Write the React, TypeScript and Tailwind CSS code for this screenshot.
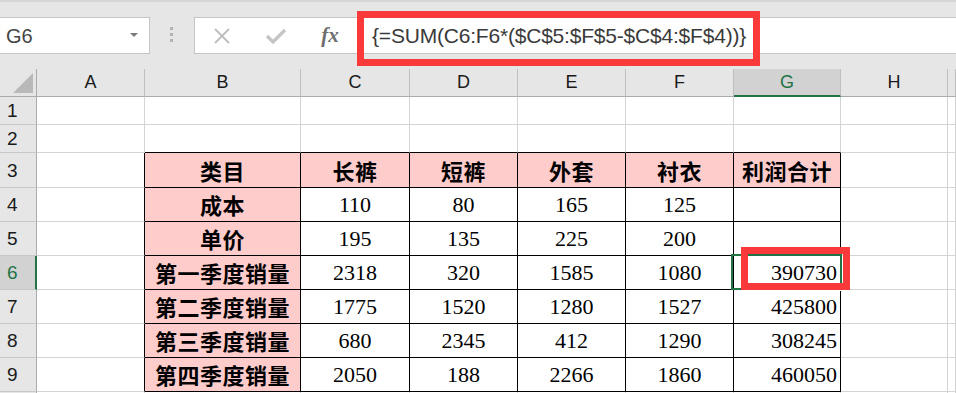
import React from 'react';

const COLS = ['', 'A', 'B', 'C', 'D', 'E', 'F', 'G', 'H', ''];
const ROWS = [1, 2, 3, 4, 5, 6, 7, 8, 9, 10];

const TABLE: Record<number, string[]> = {
  3: ['类目', '长裤', '短裤', '外套', '衬衣', '利润合计'],
  4: ['成本', '110', '80', '165', '125', ''],
  5: ['单价', '195', '135', '225', '200', ''],
  6: ['第一季度销量', '2318', '320', '1585', '1080', '390730'],
  7: ['第二季度销量', '1775', '1520', '1280', '1527', '425800'],
  8: ['第三季度销量', '680', '2345', '412', '1290', '308245'],
  9: ['第四季度销量', '2050', '188', '2266', '1860', '460050'],
};

const inTable = (r: number, c: number) => r >= 3 && r <= 9 && c >= 2 && c <= 7;

const ColHeader: React.FC<{ c: number }> = ({ c }) => {
  if (c === 0) {
    return (
      <div className="relative bg-[#e6e6e6] border-r border-b border-r-[#ababab] border-b-[#ababab]">
        <svg className="absolute left-0 top-0" width="36" height="27" viewBox="0 0 36 27">
          <polygon points="33,4 33,24 13,24" fill="#b9b9b9" />
        </svg>
      </div>
    );
  }
  const selected = COLS[c] === 'G';
  return (
    <div
      className={
        selected
          ? 'flex items-center justify-center bg-[#d2d2d2] border-r border-r-[#c0c0c0] border-b-2 border-b-[#217346] text-[#217346] text-[18px]'
          : 'flex items-center justify-center bg-[#e6e6e6] border-r border-r-[#c0c0c0] border-b border-b-[#ababab] text-[#1a1a1a] text-[18px]'
      }
    >
      {COLS[c]}
    </div>
  );
};

const RowHeader: React.FC<{ r: number }> = ({ r }) => {
  const selected = r === 6;
  return (
    <div
      className={
        selected
          ? 'flex items-center pl-[7px] pt-[2px] bg-[#d2d2d2] border-r-2 border-r-[#217346] border-b border-b-[#c8c8c8] text-[#217346] text-[19px]'
          : 'flex items-center pl-[7px] pt-[2px] bg-[#e6e6e6] border-r border-r-[#ababab] border-b border-b-[#c8c8c8] text-[#1a1a1a] text-[19px]'
      }
    >
      {r < 10 ? r : ''}
    </div>
  );
};

const Cell: React.FC<{ r: number; c: number }> = ({ r, c }) => {
  const rightBlack = r >= 3 && r <= 9 && c >= 1 && c <= 7;
  const bottomBlack = r >= 2 && r <= 9 && c >= 2 && c <= 7;
  const pink = inTable(r, c) && (r === 3 || c === 2);
  const text = inTable(r, c) ? TABLE[r][c - 2] : '';
  const numeric = inTable(r, c) && !pink;

  let cls = 'flex items-center border-r border-b overflow-hidden whitespace-nowrap ';
  cls += rightBlack ? 'border-r-black ' : 'border-r-[#d4d4d4] ';
  cls += bottomBlack ? 'border-b-black ' : 'border-b-[#d4d4d4] ';
  cls += pink ? 'bg-[#ffcccc] ' : 'bg-white ';
  if (pink) {
    cls += "justify-center font-bold text-[22px] tracking-[0.5px] font-['Noto_Sans_CJK_SC',sans-serif] text-black";
  } else if (numeric) {
    cls += c === 7 ? 'justify-end pr-[3px] ' : 'justify-center ';
    cls += "text-[22px] font-['Liberation_Serif',serif] text-black";
  }
  return <div className={cls}>{text}</div>;
};

export default function App() {
  return (
    <div className="relative w-[956px] h-[393px] overflow-hidden bg-white font-['Liberation_Sans',Arial,sans-serif]">
      {/* toolbar */}
      <div className="relative h-[69px] bg-[#e6e6e6] border-t-2 border-t-[#d6d6d6] pt-[15px] flex items-start">
        <div className="-ml-px w-[151px] h-[37px] bg-white border border-[#c6c6c6] flex items-center justify-between pl-[6px] pr-[11px]">
          <span className="text-[20px] text-[#444]">G6</span>
          <svg width="8" height="5" viewBox="0 0 8 5">
            <polygon points="0,0 8,0 4,4" fill="#7a7a7a" />
          </svg>
        </div>
        <div className="ml-[20px] mt-[10px] flex flex-col gap-[3px]">
          <div className="w-[3px] h-[3px] bg-[#b3b3b3]" />
          <div className="w-[3px] h-[3px] bg-[#b3b3b3]" />
          <div className="w-[3px] h-[3px] bg-[#b3b3b3]" />
        </div>
        <div className="ml-[21px] flex-1 h-[37px] bg-white border border-r-0 border-[#c6c6c6] flex items-center">
          <div className="w-[54px] flex justify-center">
            <svg width="18" height="16" viewBox="0 0 18 16">
              <path d="M2 1 L16 15 M16 1 L2 15" stroke="#bdbdbd" strokeWidth="1.8" fill="none" />
            </svg>
          </div>
          <div className="w-[54px] flex justify-center">
            <svg width="22" height="16" viewBox="0 0 22 16">
              <path d="M2 8 L8 14 L20 2" stroke="#c4c4c4" strokeWidth="3.2" fill="none" />
            </svg>
          </div>
          <div className="w-[54px] flex justify-center">
            <span className="font-['Liberation_Serif',serif] italic font-bold text-[21px] text-[#6e6e6e] leading-none">fx</span>
          </div>
          <span className="ml-[15px] text-[21px] text-[#3a3a3a] tracking-[-0.2px]">
            {'{=SUM(C6:F6*($C$5:$F$5-$C$4:$F$4))}'}
          </span>
        </div>
        <div className="absolute left-[357px] top-[9px] w-[403px] h-[55px] border-[7px] border-[#fa3a3a]" />
      </div>

      {/* sheet grid */}
      <div className="grid grid-cols-[37px_108px_156px_109px_108px_108px_108px_107px_107px_1fr] grid-rows-[28px_28px_28px_35px_34px_34px_34px_34px_34px_34px_4px]">
        {COLS.map((_, c) => (
          <ColHeader key={`h${c}`} c={c} />
        ))}
        {ROWS.map((r) =>
          COLS.map((_, c) =>
            c === 0 ? <RowHeader key={`r${r}`} r={r} /> : <Cell key={`${r}-${c}`} r={r} c={c} />,
          ),
        )}
      </div>

      {/* selection on G6 */}
      <div className="absolute left-[731px] top-[254px] w-[111px] h-[36px] border-2 border-[#217346]" />
      <div className="absolute left-[838px] top-[286px] w-[5px] h-[5px] bg-[#217346] border border-white" />
      {/* annotation box */}
      <div className="absolute left-[741px] top-[247px] w-[109px] h-[43px] border-[7px] border-[#fa3a3a]" />
    </div>
  );
}
